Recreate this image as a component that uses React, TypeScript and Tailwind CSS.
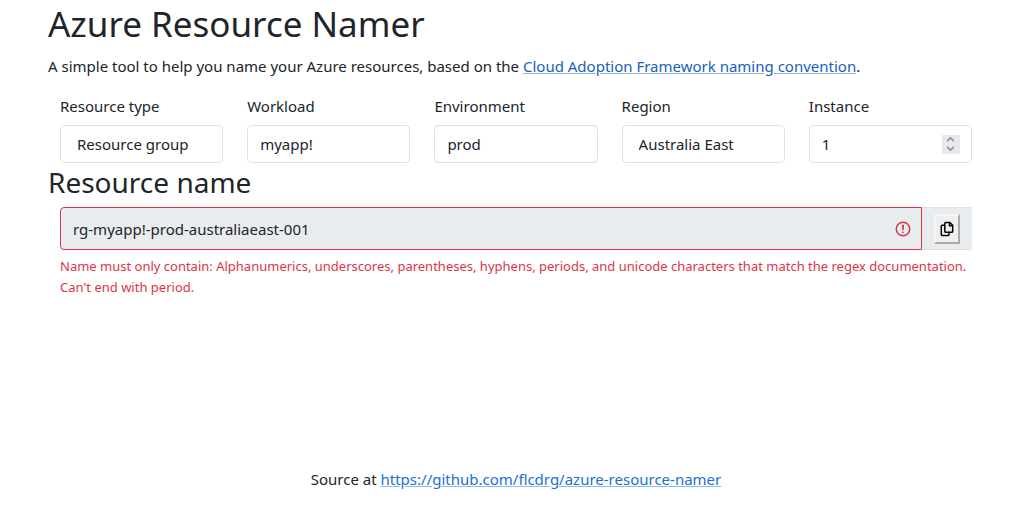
import { useState } from 'react';
import type { ReactNode } from 'react';

const control =
  'block w-full h-[38px] rounded border border-[#dee2e6] bg-white text-[15px] leading-6 text-[#212529] outline-none focus:border-[#86b7fe]';

function Field({ id, label, children }: { id: string; label: string; children: ReactNode }) {
  return (
    <div className="px-3">
      <label htmlFor={id} className="mb-[7px] block leading-6">
        {label}
      </label>
      {children}
    </div>
  );
}

function Chevron({ down }: { down?: boolean }) {
  return (
    <svg viewBox="0 0 10 6" className="h-[5px] w-[9px]" fill="none" stroke="#8f8f9d" strokeWidth="2">
      <path d={down ? 'M1 1l4 4 4-4' : 'M1 5l4-4 4 4'} />
    </svg>
  );
}

function CopyIcon() {
  return (
    <svg viewBox="0 0 16 18" className="h-4 w-3.5 shrink-0" fill="none" stroke="#000" strokeWidth="1.7" strokeLinejoin="round">
      <path d="M6.5 1.5h4.8L14.5 4.7v7.1a1 1 0 0 1-1 1h-7a1 1 0 0 1-1-1V2.5a1 1 0 0 1 1-1z" />
      <path d="M10.8 1.5v3.7h3.7" />
      <path d="M5.5 4.7h-3a1 1 0 0 0-1 1v9.6a1 1 0 0 0 1 1h6.8a1 1 0 0 0 1-1v-2.5" />
    </svg>
  );
}

export default function App() {
  const [type, setType] = useState('rg');
  const [workload, setWorkload] = useState('myapp!');
  const [environment, setEnvironment] = useState('prod');
  const [region, setRegion] = useState('australiaeast');
  const [instance, setInstance] = useState(1);

  const name = `${type}-${workload}-${environment}-${region}-${String(instance).padStart(3, '0')}`;
  const valid = /^[-\w.()]*[-\w()]$/.test(name);

  return (
    <div className="flex min-h-screen flex-col bg-white pl-12 pr-[49px] font-['Noto_Sans',sans-serif] text-[15px] text-[#212529]">
      <main className="flex-1">
        <h1 className="mb-1.5 text-[35px] leading-[48px]">Azure Resource Namer</h1>
        <p className="mb-4 leading-6">
          A simple tool to help you name your Azure resources, based on the{' '}
          <a
            href="https://learn.microsoft.com/azure/cloud-adoption-framework/ready/azure-best-practices/resource-naming"
            className="text-[#1861bf] underline decoration-[#8fb4e3]"
          >
            Cloud Adoption Framework naming convention
          </a>
          .
        </p>

        <div className="grid grid-cols-5">
          <Field id="type" label="Resource type">
            <select id="type" value={type} onChange={(e) => setType(e.target.value)} className={`${control} appearance-none px-4`}>
              <option value="rg">Resource group</option>
              <option value="app">Web app</option>
              <option value="kv">Key vault</option>
            </select>
          </Field>
          <Field id="workload" label="Workload">
            <input id="workload" value={workload} onChange={(e) => setWorkload(e.target.value)} className={`${control} px-3`} />
          </Field>
          <Field id="environment" label="Environment">
            <input id="environment" value={environment} onChange={(e) => setEnvironment(e.target.value)} className={`${control} px-3`} />
          </Field>
          <Field id="region" label="Region">
            <select id="region" value={region} onChange={(e) => setRegion(e.target.value)} className={`${control} appearance-none px-4`}>
              <option value="australiaeast">Australia East</option>
              <option value="australiasoutheast">Australia Southeast</option>
            </select>
          </Field>
          <Field id="instance" label="Instance">
            <div className="flex h-[38px] items-center rounded border border-[#dee2e6] pl-3 pr-[11px]">
              <input
                id="instance"
                type="number"
                min={1}
                value={instance}
                onChange={(e) => setInstance(Number(e.target.value))}
                className="min-w-0 flex-1 [appearance:textfield] leading-6 outline-none [&::-webkit-inner-spin-button]:appearance-none"
              />
              <div className="flex h-[19px] w-[18px] flex-col bg-[#e9e9ed] py-px">
                <button type="button" aria-label="Increase" onClick={() => setInstance(instance + 1)} className="flex flex-1 items-center justify-center">
                  <Chevron />
                </button>
                <button type="button" aria-label="Decrease" onClick={() => setInstance(Math.max(1, instance - 1))} className="flex flex-1 items-center justify-center">
                  <Chevron down />
                </button>
              </div>
            </div>
          </Field>
        </div>

        <h2 className="mb-1.5 text-[28px] leading-[38px]">
          <label htmlFor="name">Resource name</label>
        </h2>
        <div className="px-3">
          <div className="flex h-[43px]">
            <div
              className={`flex min-w-0 flex-1 items-center rounded-l border bg-[#e9ecef] pl-3 pr-[9px] ${valid ? 'border-[#dee2e6]' : 'border-[#dc3545]'}`}
            >
              <input id="name" readOnly value={name} className="min-w-0 flex-1 leading-6 outline-none" />
              {!valid && (
                <svg viewBox="0 0 12 12" className="size-[18px]" fill="none" stroke="#dc3545">
                  <circle cx="6" cy="6" r="4.5" />
                  <path strokeLinejoin="round" d="M5.8 3.6h.4L6 6.5z" />
                  <circle cx="6" cy="8.2" r=".6" fill="#dc3545" stroke="none" />
                </svg>
              )}
            </div>
            <div className="flex w-[50px] items-center justify-center border-y border-[#dee2e6] bg-[#e9ecef]">
              <button
                type="button"
                aria-label="Copy name"
                onClick={() => navigator.clipboard.writeText(name)}
                className="flex h-[30px] w-[26px] items-center justify-center border-2 border-t-[#f4f4f4] border-l-[#f4f4f4] border-r-[#a8aaac] border-b-[#a8aaac] bg-[#efefef]"
              >
                <CopyIcon />
              </button>
            </div>
          </div>
          {!valid && (
            <p className="mt-1.5 text-[13px] leading-[21px] text-[#dc3545]">
              Name must only contain: Alphanumerics, underscores, parentheses, hyphens, periods, and unicode characters that
              match the regex documentation. Can't end with period.
            </p>
          )}
        </div>
      </main>

      <footer className="pb-4 text-center leading-6">
        Source at{' '}
        <a href="https://github.com/flcdrg/azure-resource-namer" className="text-[#1b6fd8] underline decoration-[#8fbcf2]">
          https://github.com/flcdrg/azure-resource-namer
        </a>
      </footer>
    </div>
  );
}
